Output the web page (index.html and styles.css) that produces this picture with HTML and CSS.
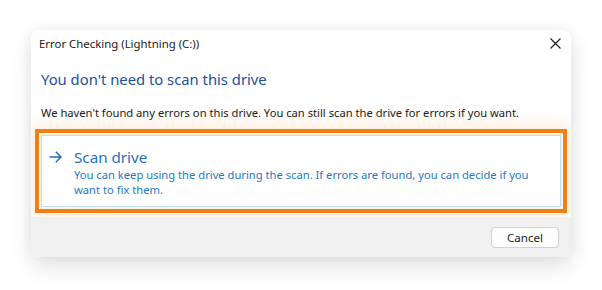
FILE: index.html
```html
<!DOCTYPE html>
<html>
<head>
<meta charset="utf-8">
<link rel="stylesheet" href="styles.css">
</head>
<body>
<div class="stage">
  <div class="dialog">
    <div class="titlebar">
      <span class="title">Error Checking (Lightning (C:))</span>
      <svg class="close" width="11" height="11" viewBox="0 0 11 11"><path d="M0.5 0.5 L10.5 10.5 M10.5 0.5 L0.5 10.5" stroke="#1a1a1a" stroke-width="1.1" fill="none"/></svg>
    </div>
    <div class="content">
      <h1 class="heading">You don't need to scan this drive</h1>
      <p class="info">We haven't found any errors on this drive. You can still scan the drive for errors if you want.</p>
      <div class="command">
        <svg class="arrow" width="13" height="12" viewBox="0 0 13 12"><path d="M0.5 6 H12 M6.8 0.8 L12 6 L6.8 11.2" stroke="#1f6fc0" stroke-width="1.5" fill="none"/></svg>
        <div class="command-text">
          <div class="command-title">Scan drive</div>
          <div class="command-desc">You can keep using the drive during the scan. If errors are found, you can decide if you want to fix them.</div>
        </div>
      </div>
    </div>
    <div class="footer">
      <button class="btn">Cancel</button>
    </div>
  </div>
</div>
</body>
</html>
```
FILE: styles.css
```css
html, body {
  margin: 0;
  padding: 0;
  background: #ffffff;
}
body {
  font-family: "Noto Sans", "Open Sans", sans-serif;
  color: #1a1a1a;
}
.stage {
  padding: 30px 31px 33px 31px;
}
.dialog {
  width: 540px;
  height: 227px;
  background: #ffffff;
  border-radius: 8px;
  box-shadow: 0 10px 22px rgba(0, 0, 0, 0.11), 0 0 14px rgba(0, 0, 0, 0.06);
  display: flex;
  flex-direction: column;
  overflow: hidden;
}
.titlebar {
  height: 28px;
  display: flex;
  align-items: center;
  justify-content: space-between;
  padding: 0 10px 0 8px;
}
.title {
  font-size: 11.4px;
  line-height: 28px;
  color: #1a1a1a;
}
.close {
  display: block;
  margin-top: -2px;
}
.content {
  flex: 1;
  padding: 0 10px;
}
.heading {
  margin: 11px 0 0 0;
  font-size: 14.8px;
  line-height: 20px;
  font-weight: 400;
  color: #1b4ea0;
}
.info {
  margin: 16px 0 0 0;
  font-size: 11.2px;
  line-height: 16px;
  color: #1a1a1a;
}
.command {
  margin-top: 14px;
  height: 72px;
  box-sizing: border-box;
  border: 1px solid #c4dcf2;
  outline: 4px solid #f0800f;
  outline-offset: 2px;
  box-shadow: 0 0 0 6px #fff4ea, 0 0 18px 9px rgba(255, 165, 90, 0.25);
  padding: 11px 10px 0 7px;
  display: flex;
  gap: 12px;
  background: #ffffff;
}
.arrow {
  flex: none;
  margin-top: 4px;
}
.command-title {
  font-size: 15.2px;
  line-height: 20px;
  color: #1f6fc0;
}
.command-desc {
  font-size: 11.2px;
  line-height: 15px;
  color: #2277c9;
}
.footer {
  height: 40px;
  flex: none;
  background: #f0f0f0;
  display: flex;
  justify-content: flex-end;
  align-items: flex-start;
  padding: 10px 12px 0 0;
  box-sizing: border-box;
}
.btn {
  width: 68px;
  height: 21px;
  background: #fdfdfd;
  border: 1px solid #d0d0d0;
  border-radius: 4px;
  font-family: "Noto Sans", "Open Sans", sans-serif;
  font-size: 11.6px;
  color: #1a1a1a;
  padding: 0;
  line-height: 19px;
}
```
